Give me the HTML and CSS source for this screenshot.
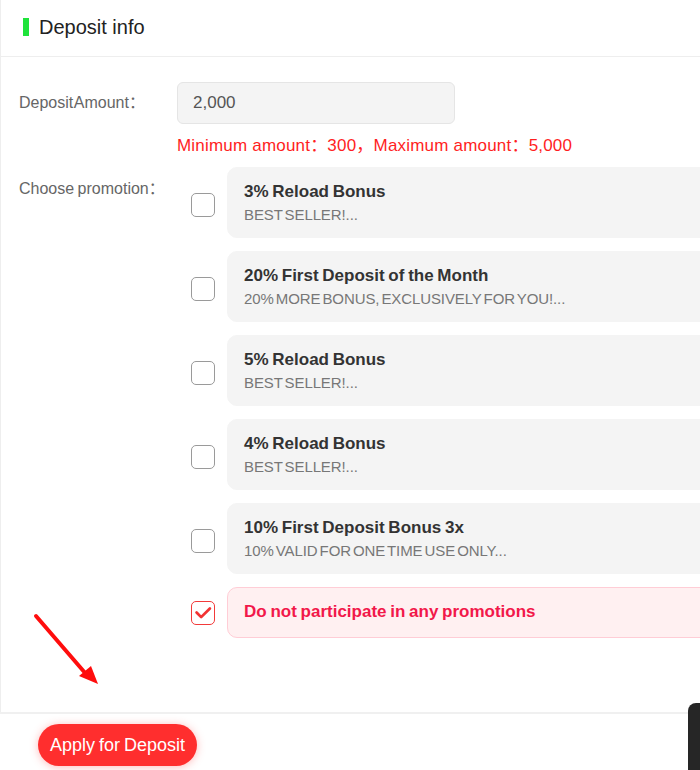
FILE: index.html
```html
<!DOCTYPE html>
<html lang="en">
<head>
  <meta charset="UTF-8">
  <title>Deposit</title>
  <link rel="stylesheet" href="styles.css">
</head>
<body>
  <div class="page">
    <div class="panel">
      <div class="panel-head">
        <span class="head-bar"></span>
        <h2 class="head-title">Deposit info</h2>
      </div>

      <div class="form">
        <div class="row">
          <label class="row-label">Deposit Amount：</label>
          <div class="row-body">
            <div class="amount-input">2,000</div>
            <p class="hint">Minimum amount：300，Maximum amount：5,000</p>
          </div>
        </div>

        <div class="row promo-row">
          <label class="row-label promo-label">Choose promotion：</label>
          <div class="row-body promo-list">
            <div class="promo">
              <span class="check"></span>
              <div class="promo-card">
                <div class="promo-title">3% Reload Bonus</div>
                <div class="promo-desc">BEST SELLER!...</div>
              </div>
            </div>
            <div class="promo">
              <span class="check"></span>
              <div class="promo-card">
                <div class="promo-title">20% First Deposit of the Month</div>
                <div class="promo-desc">20% MORE BONUS, EXCLUSIVELY FOR YOU!...</div>
              </div>
            </div>
            <div class="promo">
              <span class="check"></span>
              <div class="promo-card">
                <div class="promo-title">5% Reload Bonus</div>
                <div class="promo-desc">BEST SELLER!...</div>
              </div>
            </div>
            <div class="promo">
              <span class="check"></span>
              <div class="promo-card">
                <div class="promo-title">4% Reload Bonus</div>
                <div class="promo-desc">BEST SELLER!...</div>
              </div>
            </div>
            <div class="promo">
              <span class="check"></span>
              <div class="promo-card">
                <div class="promo-title">10% First Deposit Bonus 3x</div>
                <div class="promo-desc">10% VALID FOR ONE TIME USE ONLY...</div>
              </div>
            </div>
            <div class="promo">
              <span class="check checked">
                <svg width="24" height="24" viewBox="0 0 24 24"><path d="M5 11.5 L10 16.5 L19.5 7" fill="none" stroke="#f23333" stroke-width="3" stroke-linecap="round" stroke-linejoin="round"/></svg>
              </span>
              <div class="promo-card none">
                <div class="promo-title">Do not participate in any promotions</div>
              </div>
            </div>
          </div>
        </div>
      </div>
    </div>

    <div class="panel-foot">
      <button class="apply-btn">Apply for Deposit</button>
    </div>
  </div>

  <svg class="arrow" width="120" height="110" viewBox="0 600 120 110">
    <line x1="36" y1="616" x2="86" y2="674" stroke="#ff0d0d" stroke-width="4" stroke-linecap="round"/>
    <polygon points="98,684 79,676 91,666" fill="#ff0d0d"/>
  </svg>

  <div class="widget"></div>
</body>
</html>
```

FILE: styles.css
```css
* {
  box-sizing: border-box;
}

html,
body {
  margin: 0;
  padding: 0;
  width: 700px;
  height: 770px;
  overflow: hidden;
  background: #fff;
}

body {
  font-family: "Liberation Sans", Arial, "Noto Sans CJK SC", sans-serif;
  position: relative;
}

.page {
  width: 760px;
}

.panel {
  border-left: 1px solid #eee;
  height: 712px;
}

.panel-head {
  display: flex;
  align-items: center;
  height: 57px;
  padding: 0 0 2px 22px;
  border-bottom: 1px solid #eee;
}

.head-bar {
  width: 6px;
  height: 18px;
  background: #1fe33b;
}

.head-title {
  margin: 0 0 0 10px;
  font-size: 20px;
  font-weight: normal;
  color: #222;
}

.form {
  padding: 25px 0 0 18px;
}

.row {
  display: flex;
}

.row-label {
  width: 158px;
  flex: none;
  font-size: 16px;
  line-height: 42px;
  color: #666;
  word-spacing: -3px;
  white-space: nowrap;
}

.amount-input {
  width: 278px;
  height: 42px;
  padding: 0 15px;
  border: 1px solid #e5e5e5;
  border-radius: 6px;
  background: #f4f4f4;
  font-size: 17px;
  line-height: 40px;
  color: #555;
}

.hint {
  margin: 12px 0 0;
  font-size: 17px;
  line-height: 20px;
  color: #ff1e1e;
  letter-spacing: 0.2px;
  white-space: nowrap;
}

.promo-row {
  margin-top: 11px;
}

.promo-label {
  line-height: 22px;
  padding-top: 11px;
  word-spacing: -1px;
}

.promo-list {
  flex: 1;
}

.promo {
  display: flex;
  align-items: center;
  margin-bottom: 13px;
}

.check {
  width: 24px;
  height: 24px;
  flex: none;
  margin: 4px 12px 0 14px;
  border: 1px solid #9a9a9a;
  border-radius: 5px;
  background: #fff;
  display: flex;
  align-items: center;
  justify-content: center;
}

.check.checked {
  border-color: #f23a3a;
  margin-top: 0;
}

.check svg {
  display: block;
}

.promo-card {
  flex: 1;
  padding: 13px 16px 12px;
  border: 1px solid #f4f4f4;
  border-radius: 10px;
  background: #f4f4f4;
}

.promo-title {
  font-size: 17px;
  line-height: 22px;
  font-weight: bold;
  color: #333;
  word-spacing: -1px;
}

.promo-desc {
  margin-top: 2px;
  font-size: 15px;
  line-height: 20px;
  color: #777;
  word-spacing: -2px;
  letter-spacing: -0.1px;
}

.promo-card.none {
  padding: 13px 16px 14px;
  border-color: #ffcdd6;
  background: #fff0f1;
}

.promo-card.none .promo-title {
  color: #f2184a;
}

.panel-foot {
  border-top: 2px solid #f0f0f0;
  padding: 10px 0 0 38px;
}

.apply-btn {
  height: 42px;
  padding: 0 12px;
  border: none;
  border-radius: 21px;
  background: #ff2e2e;
  color: #fff;
  font-family: "Liberation Sans", Arial, sans-serif;
  font-size: 18px;
  word-spacing: -1px;
  box-shadow: 0 1px 8px rgba(255, 60, 60, 0.35);
  cursor: pointer;
}

.arrow {
  position: absolute;
  left: 0;
  top: 600px;
}

.widget {
  position: absolute;
  left: 688px;
  top: 703px;
  width: 40px;
  height: 100px;
  border-radius: 8px 0 0 0;
  background: #262626;
}
```
